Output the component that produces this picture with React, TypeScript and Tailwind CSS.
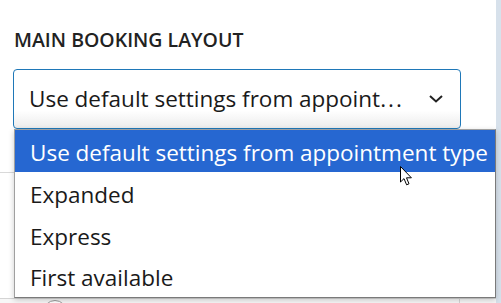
import React from "react";

function Cursor() {
  return (
    <svg width="14" height="21" viewBox="0 0 14 21" className="absolute left-[400px] top-[166px]">
      <path d="M0.5 0.5 L0.5 16 L4 12.6 L6.6 18.8 L9 17.8 L6.5 11.8 L11.4 11.8 Z" fill="#fff" stroke="#000" strokeWidth="1" strokeLinejoin="miter" />
    </svg>
  );
}

export default function App() {
  const options = ["Expanded", "Express", "First available"];
  return (
    <div className="relative w-[501px] h-[303px] overflow-hidden bg-white flex" style={{ fontFamily: '"Open Sans", "Noto Sans", sans-serif' }}>
      <div className="flex-1 flex flex-col">
        <div className="pl-[14px] pt-[29px] text-[19.5px] font-semibold text-[#222] leading-[22px] whitespace-nowrap">MAIN BOOKING LAYOUT</div>
        <div className="ml-[13px] mt-[18px] w-[448px] h-[60px] border-[1.5px] border-[#1f78b8] rounded-[4px] bg-gradient-to-b from-white from-70% to-[#ececec] flex items-center pl-[15px] pr-[17px]">
          <span className="flex-1 text-[22.5px] text-[#1a1a1a] whitespace-nowrap">
            Use default settings from appoint<span className="tracking-[2px]">...</span>
          </span>
          <svg width="14" height="8" viewBox="0 0 14 8">
            <path d="M1 1 L7 6.5 L13 1" fill="none" stroke="#222" strokeWidth="2" />
          </svg>
        </div>
        <div className="mt-[43px] border-t border-[#d9d9d9] h-[126px]"></div>
        <div className="border-t border-[#d4d4d4] flex-1 bg-[#f7f7f7] relative">
          <div className="absolute left-[43px] top-[1px] w-[24px] h-[24px] rounded-full border border-[#9a9a9a] bg-white"></div>
          <div className="absolute left-[459px] top-0 h-full border-l border-[#d4d4d4]"></div>
        </div>
      </div>
      <div className="w-[5px] bg-[#d7e1eb]"></div>

      <div className="absolute left-[14px] top-[129px] w-[482px] h-[169px] bg-white border border-[#a0a0a0] border-r-[#7a7a7a] border-b-[#7a7a7a] shadow-[0_2px_6px_rgba(0,0,0,0.2)] flex flex-col">
        <div className="h-[42px] bg-[#2667d1] text-white flex items-center pl-[15px] pt-[4px] text-[22.5px] whitespace-nowrap">Use default settings from appointment type</div>
        {options.map((o) => (
          <div key={o} className="h-[42px] flex items-center pl-[15px] pt-[4px] text-[22.5px] text-[#1a1a1a] whitespace-nowrap">{o}</div>
        ))}
      </div>
      <Cursor />
    </div>
  );
}
